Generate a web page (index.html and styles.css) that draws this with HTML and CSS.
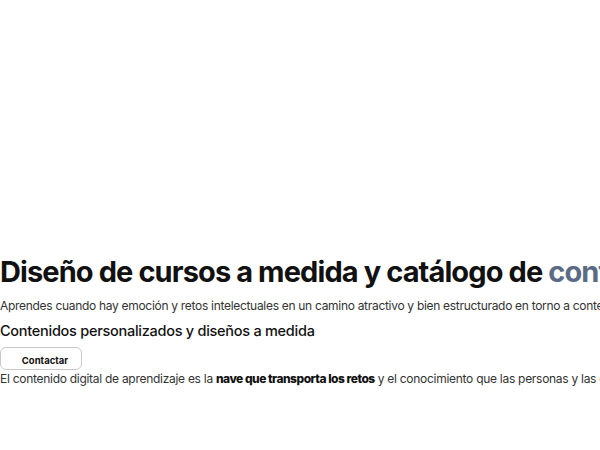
FILE: index.html
```html
<!DOCTYPE html>
<html lang="es">
<head>
<meta charset="utf-8">
<link rel="stylesheet" href="styles.css">
</head>
<body>
<main class="page">
  <section class="hero">
    <h1 class="title">Diseño de cursos a medida y catálogo de <span class="accent">contenidos</span></h1>
    <p class="lead">Aprendes cuando hay emoción y retos intelectuales en un camino atractivo y bien estructurado en torno a contenidos de calidad.</p>
    <h2 class="subtitle">Contenidos personalizados y diseños a medida</h2>
    <button class="btn">Contactar</button>
    <p class="text">El contenido digital de aprendizaje es la <strong>nave que transporta los retos</strong> y el conocimiento que las personas y las compañías necesitan.</p>
  </section>
</main>
</body>
</html>
```
FILE: styles.css
```css
html, body { margin: 0; padding: 0; background: #fff; }
body { font-family: "Inter", "Noto Sans", sans-serif; color: #111; overflow: hidden; }
.page { width: 600px; height: 450px; overflow: hidden; }
.hero { padding-top: 253px; white-space: nowrap; }
.title { margin: 0; font-size: 29px; font-weight: 700; line-height: 38px; color: #111; letter-spacing: -0.9px; }
.accent { color: #5b6b86; }
.lead { margin: 7px 0 0; font-size: 12px; line-height: 16px; color: #333; letter-spacing: -0.3px; }
.subtitle { margin: 7px 0 0; font-size: 14.5px; font-weight: 500; line-height: 20px; color: #111; letter-spacing: -0.27px; }
.btn { display: block; margin-top: 6px; width: 82px; height: 23px; padding: 3px 0 0 8px; border: 1px solid #c8c8c8; border-radius: 6px; background: #fff; font-family: inherit; font-size: 9.5px; font-weight: 700; color: #111; }
.text { margin: 0; font-size: 12px; line-height: 17px; color: #333; letter-spacing: -0.28px; }
.text strong { color: #111; font-weight: 800; letter-spacing: -0.5px; }
```
